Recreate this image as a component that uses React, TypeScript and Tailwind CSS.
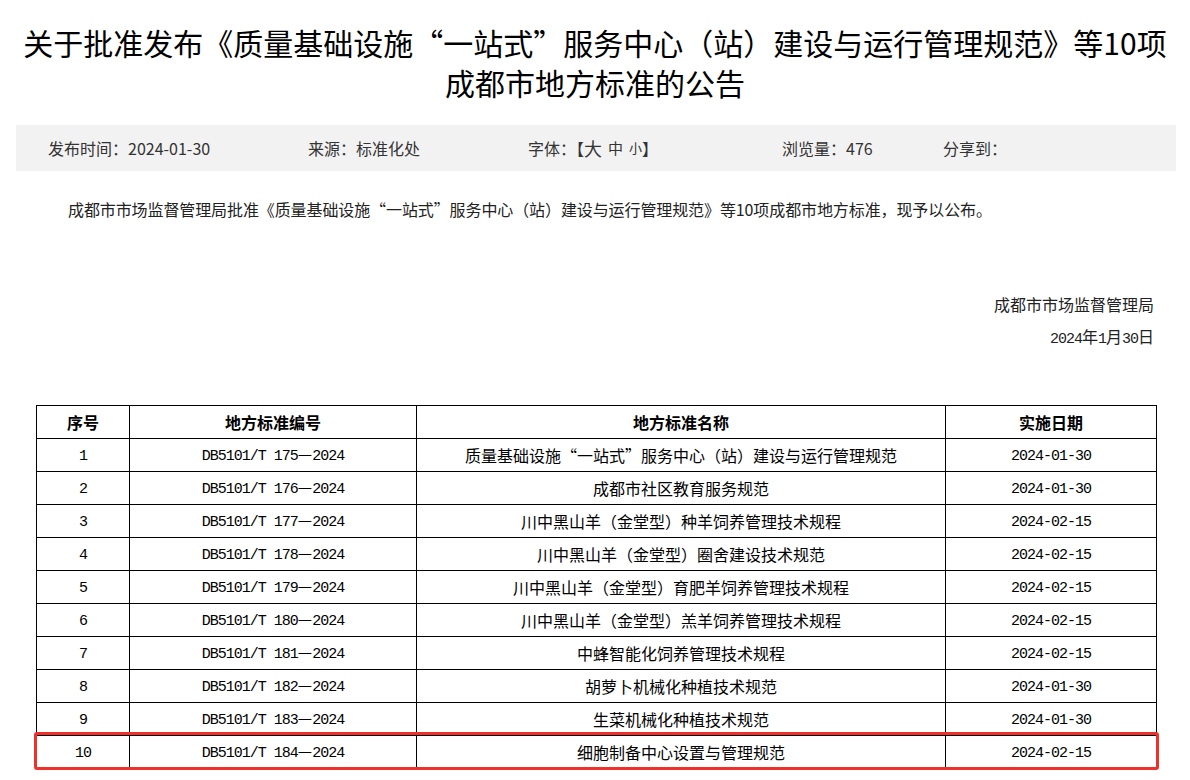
import React from "react";

const rows = [
  ["1", "175", "质量基础设施“一站式”服务中心（站）建设与运行管理规范", "2024-01-30"],
  ["2", "176", "成都市社区教育服务规范", "2024-01-30"],
  ["3", "177", "川中黑山羊（金堂型）种羊饲养管理技术规程", "2024-02-15"],
  ["4", "178", "川中黑山羊（金堂型）圈舍建设技术规范", "2024-02-15"],
  ["5", "179", "川中黑山羊（金堂型）育肥羊饲养管理技术规程", "2024-02-15"],
  ["6", "180", "川中黑山羊（金堂型）羔羊饲养管理技术规程", "2024-02-15"],
  ["7", "181", "中蜂智能化饲养管理技术规程", "2024-02-15"],
  ["8", "182", "胡萝卜机械化种植技术规范", "2024-01-30"],
  ["9", "183", "生菜机械化种植技术规范", "2024-01-30"],
  ["10", "184", "细胞制备中心设置与管理规范", "2024-02-15"],
];

const cjk = { fontFamily: '"Noto Sans CJK SC", sans-serif' };

function Mono({ children }: { children: React.ReactNode }) {
  return (
    <span className="font-['Liberation_Mono',monospace] text-[15px] tracking-[-1px]">{children}</span>
  );
}

export default function App() {
  return (
    <div className="w-[1190px] h-[780px] overflow-hidden bg-white text-black font-['Noto_Sans_CJK_SC',sans-serif]">
      <h1 className="pt-[22px] text-center text-[30px] leading-[40px] font-normal text-black px-4">
        关于批准发布《质量基础设施“一站式”服务中心（站）建设与运行管理规范》等10项
        <br />
        成都市地方标准的公告
      </h1>

      <div className="ml-[16px] mr-[14px] mt-[23px] h-[46px] bg-[#f2f2f2] flex items-center pl-[32px] text-[16px] text-[#333]">
        <div className="w-[260px]">发布时间：2024-01-30</div>
        <div className="w-[220px]">来源：标准化处</div>
        <div className="w-[254px] flex items-center">
          字体：【<span className="text-[18px]">大</span>
          <span className="text-[15px] ml-[6px]">中</span>
          <span className="text-[13px] ml-[6px]">小</span>】
        </div>
        <div className="w-[161px]">浏览量：476</div>
        <div>分享到：</div>
      </div>

      <p className="mt-[26px] pl-[68px] text-[16px] leading-[24px] text-[#222] tracking-[-0.1px]">
        成都市市场监督管理局批准《质量基础设施“一站式”服务中心（站）建设与运行管理规范》等10项成都市地方标准，现予以公布。
      </p>

      <div className="mt-[67px] pr-[36px] text-right text-[16px] leading-[32px] text-[#222]">
        <div>成都市市场监督管理局</div>
        <div>
          <Mono>2024</Mono>年<Mono>1</Mono>月<Mono>30</Mono>日
        </div>
      </div>

      <div className="relative mx-[36px] mt-[49px] w-[1120px]">
        <table className="w-[1120px] table-fixed border-collapse text-[16px]" style={cjk}>
          <colgroup>
            <col className="w-[93px]" />
            <col className="w-[287px]" />
            <col className="w-[529px]" />
            <col className="w-[211px]" />
          </colgroup>
          <thead>
            <tr className="h-[33px]">
              <th className="border border-black font-bold text-center p-0">序号</th>
              <th className="border border-black font-bold text-center p-0">地方标准编号</th>
              <th className="border border-black font-bold text-center p-0">地方标准名称</th>
              <th className="border border-black font-bold text-center p-0">实施日期</th>
            </tr>
          </thead>
          <tbody>
            {rows.map((r) => (
              <tr key={r[0]} className="h-[33px]">
                <td className="border border-black text-center p-0">
                  <Mono>{r[0]}</Mono>
                </td>
                <td className="border border-black text-center p-0">
                  <Mono>DB5101/T {r[1]}</Mono>
                  <span className="text-[16px]">—</span>
                  <Mono>2024</Mono>
                </td>
                <td className="border border-black text-center p-0">{r[2]}</td>
                <td className="border border-black text-center p-0">
                  <Mono>{r[3]}</Mono>
                </td>
              </tr>
            ))}
          </tbody>
        </table>
        <div className="absolute left-[-2px] right-[-3px] top-[327px] h-[38px] rounded-[3px] border-[3px] border-[#f2302a] pointer-events-none" />
      </div>
    </div>
  );
}
